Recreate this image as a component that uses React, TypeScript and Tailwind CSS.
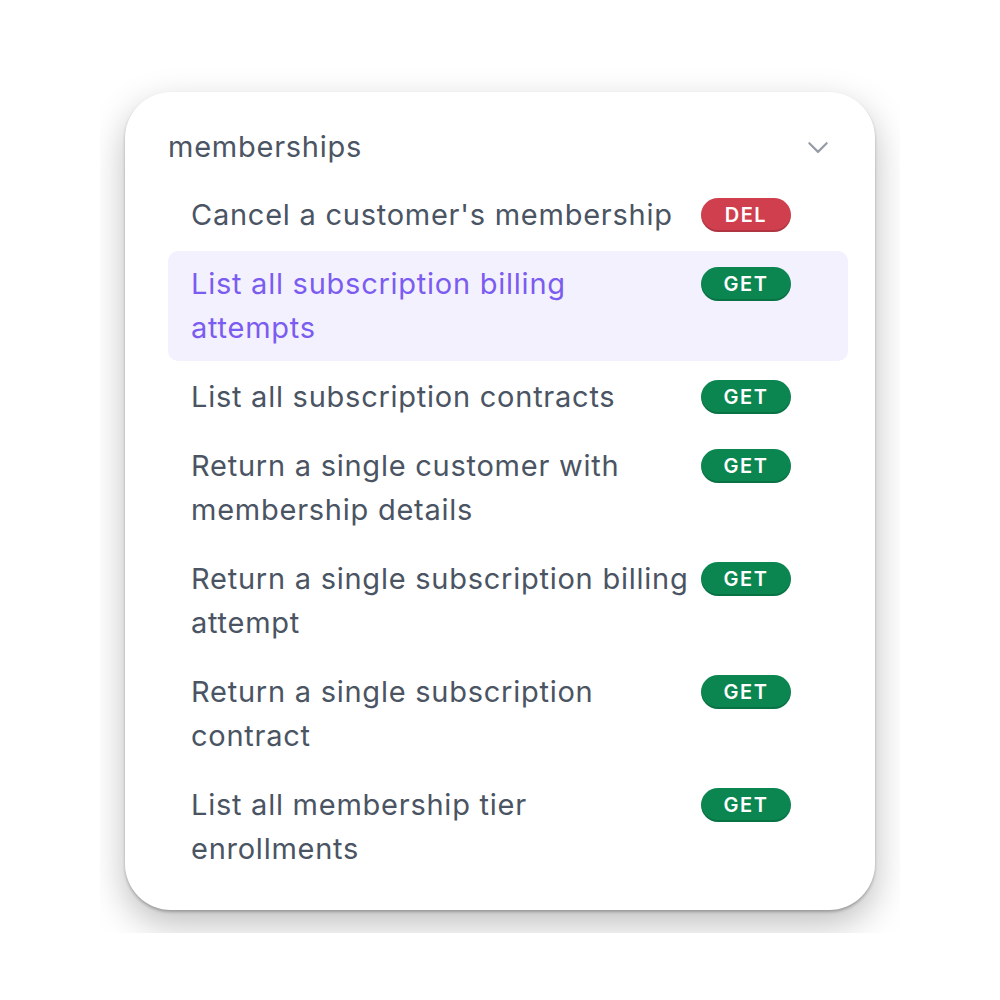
import React from "react";

type Item = { label: string; method: "GET" | "DEL"; active?: boolean };

const items: Item[] = [
  { label: "Cancel a customer's membership", method: "DEL" },
  { label: "List all subscription billing attempts", method: "GET", active: true },
  { label: "List all subscription contracts", method: "GET" },
  { label: "Return a single customer with membership details", method: "GET" },
  { label: "Return a single subscription billing attempt", method: "GET" },
  { label: "Return a single subscription contract", method: "GET" },
  { label: "List all membership tier enrollments", method: "GET" },
];

function Badge({ method }: { method: "GET" | "DEL" }) {
  const cls =
    method === "DEL"
      ? "bg-[#cf3f4e] shadow-[inset_0_-2px_0_rgba(0,0,0,0.15)]"
      : "bg-[#0b8650] shadow-[inset_0_-2px_0_rgba(0,0,0,0.15)]";
  return (
    <div
      className={`${cls} w-[90px] h-[34px] rounded-full flex items-center justify-center text-white text-[20px] font-semibold tracking-[1.5px] shrink-0`}
    >
      {method}
    </div>
  );
}

export default function App() {
  return (
    <div
      className="w-[1000px] h-[1000px] bg-white flex items-center justify-center"
      style={{ fontFamily: "Inter, 'Noto Sans', sans-serif" }}
    >
      <div className="w-[800px] h-[866px] overflow-hidden bg-white p-[25px]">
        <div className="w-[750px] h-[818px] bg-white rounded-[46px] shadow-[0_2px_3px_rgba(0,0,0,0.25),0_14px_36px_rgba(0,0,0,0.26)] pl-[43px] pr-[27px] pt-[34px]">
          <div className="flex items-center justify-between h-[42px] pr-[17px]">
            <span className="text-[29px] text-[#4b5563] tracking-[0.75px]">memberships</span>
            <svg width="26" height="26" viewBox="0 0 24 24" fill="none" stroke="#959ca6" strokeWidth="2" strokeLinecap="round" strokeLinejoin="round">
              <path d="M4 8.5l8 8 8-8" />
            </svg>
          </div>
          <div className="flex flex-col gap-[3px] mt-[14px]">
            {items.map((it) => (
              <div
                key={it.label}
                className={`flex items-start gap-[11px] pl-[23px] pr-[57px] py-[11px] rounded-[10px] ${
                  it.active ? "bg-[#f3f1fe]" : ""
                }`}
              >
                <div
                  className={`flex-1 text-[29px] leading-[44px] tracking-[0.75px] ${
                    it.active ? "text-[#7b5cf0]" : "text-[#4a5463]"
                  }`}
                >
                  {it.label}
                </div>
                <div className="pt-[5px]">
                  <Badge method={it.method} />
                </div>
              </div>
            ))}
          </div>
        </div>
      </div>
    </div>
  );
}
